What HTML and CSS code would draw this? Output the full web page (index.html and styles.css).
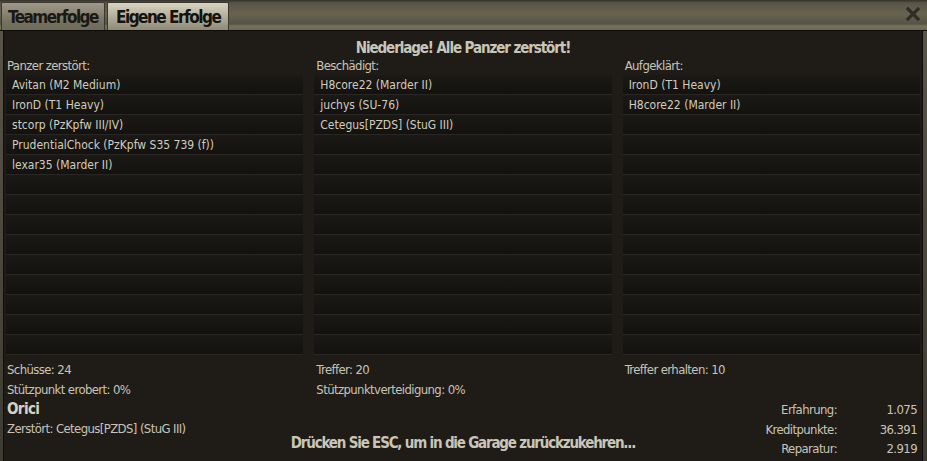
FILE: index.html
```html
<!DOCTYPE html>
<html lang="de">
<head>
<meta charset="utf-8">
<link rel="stylesheet" href="styles.css">
</head>
<body>
<div class="window">
  <div class="titlebar">
    <div class="tab">Teamerfolge</div>
    <div class="tab active">Eigene Erfolge</div>
    <div class="spacer"></div>
    <div class="close"><svg width="14" height="14" viewBox="0 0 14 14"><path d="M2 2 L12 12 M12 2 L2 12" stroke="#2f2d27" stroke-width="3.2" stroke-linecap="square"/></svg></div>
  </div>
  <div class="panel">
    <div class="heading">Niederlage! Alle Panzer zerstört!</div>
    <div class="columns">
      <div class="col">
        <div class="label">Panzer zerstört:</div>
        <div class="list">
          <div class="row">Avitan (M2 Medium)</div>
          <div class="row">IronD (T1 Heavy)</div>
          <div class="row">stcorp (PzKpfw III/IV)</div>
          <div class="row">PrudentialChock (PzKpfw S35 739 (f))</div>
          <div class="row">lexar35 (Marder II)</div>
          <div class="row"></div><div class="row"></div><div class="row"></div><div class="row"></div>
          <div class="row"></div><div class="row"></div><div class="row"></div><div class="row"></div><div class="row"></div>
        </div>
      </div>
      <div class="col">
        <div class="label">Beschädigt:</div>
        <div class="list">
          <div class="row">H8core22 (Marder II)</div>
          <div class="row">juchys (SU-76)</div>
          <div class="row">Cetegus[PZDS] (StuG III)</div>
          <div class="row"></div><div class="row"></div><div class="row"></div><div class="row"></div>
          <div class="row"></div><div class="row"></div><div class="row"></div><div class="row"></div>
          <div class="row"></div><div class="row"></div><div class="row"></div>
        </div>
      </div>
      <div class="col">
        <div class="label">Aufgeklärt:</div>
        <div class="list">
          <div class="row">IronD (T1 Heavy)</div>
          <div class="row">H8core22 (Marder II)</div>
          <div class="row"></div><div class="row"></div><div class="row"></div><div class="row"></div>
          <div class="row"></div><div class="row"></div><div class="row"></div><div class="row"></div>
          <div class="row"></div><div class="row"></div><div class="row"></div><div class="row"></div>
        </div>
      </div>
    </div>
    <div class="columns stats">
      <div class="col"><div class="stat">Schüsse: 24</div><div class="stat">Stützpunkt erobert: 0%</div></div>
      <div class="col"><div class="stat">Treffer: 20</div><div class="stat">Stützpunktverteidigung: 0%</div></div>
      <div class="col"><div class="stat">Treffer erhalten: 10</div></div>
    </div>
    <div class="footer">
      <div class="vehicle">
        <div class="name">Orici</div>
        <div class="stat">Zerstört: Cetegus[PZDS] (StuG III)</div>
      </div>
      <div class="esc">Drücken Sie ESC, um in die Garage zurückzukehren...</div>
      <div class="totals">
        <div class="k">Erfahrung:</div><div class="v">1.075</div>
        <div class="k">Kreditpunkte:</div><div class="v">36.391</div>
        <div class="k">Reparatur:</div><div class="v">2.919</div>
      </div>
    </div>
  </div>
</div>
</body>
</html>
```
FILE: styles.css
```css
* { box-sizing: border-box; }
html, body { margin: 0; padding: 0; background: #2a2822; }
.window {
  width: 927px;
  height: 461px;
  background: linear-gradient(#5a564a, #3e3b33);
  display: flex;
  flex-direction: column;
  font-family: "DejaVu Sans Condensed", "Liberation Sans", sans-serif;
  color: #c8c4b7;
}
.titlebar {
  height: 31px;
  display: flex;
  align-items: flex-end;
  background: linear-gradient(#34312a 0px, #5a5649 3px, #67634f 14px, #575345 24px, #78735f 26px, #6c6857 30px);
  border-bottom: 1px solid #0e0d0b;
  padding-left: 1px;
}
.tab {
  height: 28px;
  padding: 0 6px;
  margin-right: 2px;
  font-weight: bold;
  font-size: 17px;
  letter-spacing: -1.5px;
  line-height: 28px;
  color: #1a1915;
  background: linear-gradient(#9e998a, #77725f 70%, #6e6a59);
  border: 1px solid #3b382f;
  border-bottom: none;
  border-radius: 2px 2px 0 0;
}
.tab.active {
  background: linear-gradient(#d8d3c0, #b4af9c 50%, #8f8a76);
  color: #141310;
  padding: 0 8px;
}
.spacer { flex: 1; }
.close {
  width: 20px;
  height: 28px;
  display: flex;
  align-items: center;
  justify-content: center;
  margin-right: 4px;
  margin-bottom: 2px;
}
.panel {
  flex: 1;
  margin: 0 4px 4px 3px;
  background: #1f1c18;
  border: 1px solid #0f0e0c;
  border-top: none;
  padding: 0 2px;
  display: flex;
  flex-direction: column;
}
.heading {
  text-align: center;
  font-weight: bold;
  font-size: 15px;
  letter-spacing: -1.1px;
  height: 24px;
  line-height: 26px;
  padding-top: 2px;
  color: #c9c5b7;
  margin-top: 2px;
}
.columns {
  display: grid;
  grid-template-columns: 1fr 1fr 1fr;
  column-gap: 11px;
}
.label {
  font-size: 13px;
  letter-spacing: -0.6px;
  height: 18px;
  line-height: 18px;
  padding-left: 1px;
}
.col + .col .label, .col + .col .stat { padding-left: 2px; }
.list {
  background: #161411;
  display: flex;
  flex-direction: column;
}
.row {
  height: 20px;
  line-height: 20px;
  border-bottom: 1px solid #2a2722;
  padding-left: 6px;
  font-size: 12px;
  color: #d0ccbf;
  background: linear-gradient(#1b1915, #131210);
}
.stats { margin-top: 5px; }
.stat {
  font-size: 13px;
  letter-spacing: -0.6px;
  height: 20px;
  line-height: 20px;
  padding-left: 1px;
}
.footer {
  display: grid;
  grid-template-columns: 1fr auto 1fr;
  align-items: end;
  flex: 1;
  padding-bottom: 2px;
}
.vehicle { align-self: start; }
.name {
  font-weight: bold;
  font-size: 15px;
  letter-spacing: -0.6px;
  height: 19px;
  line-height: 19px;
  padding-left: 1px;
  color: #d6d2c4;
}
.esc {
  font-weight: bold;
  font-size: 15px;
  letter-spacing: -1.2px;
  line-height: 20px;
  color: #c9c5b7;
  padding-bottom: 6px;
}
.totals {
  justify-self: end;
  display: grid;
  grid-template-columns: auto 80px;
  font-size: 13px;
  letter-spacing: -0.6px;
  line-height: 19.5px;
  padding-right: 3px;
}
.totals .k { text-align: right; }
.totals .v { text-align: right; }
```
